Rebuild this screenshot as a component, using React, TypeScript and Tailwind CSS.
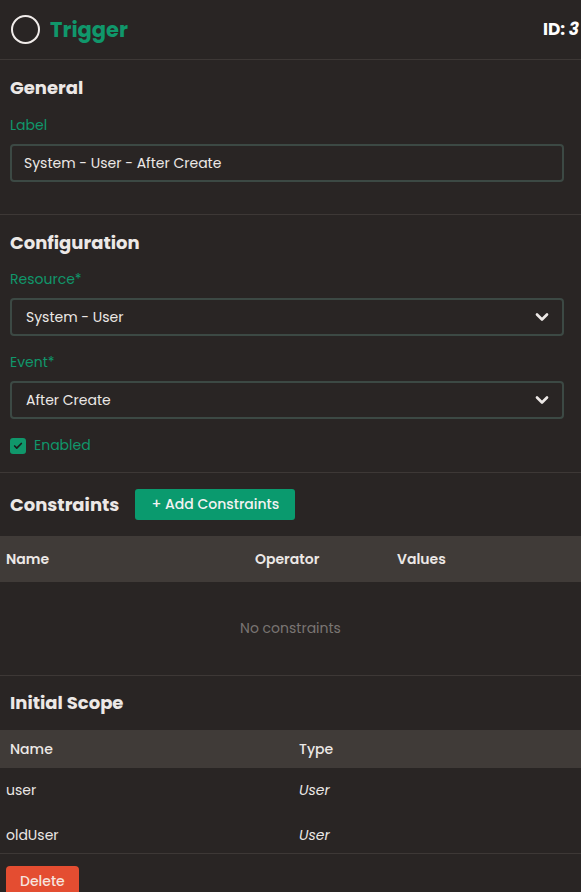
import React from "react";
import { ChevronDown, Check } from "lucide-react";

const font = { fontFamily: "Poppins, Inter, 'Open Sans', sans-serif" };

function Field({ label, children }: { label: string; children: React.ReactNode }) {
  return (
    <div className="flex flex-col">
      <label className="text-[14px] text-[#10976b] leading-5 mb-[9px]">{label}</label>
      {children}
    </div>
  );
}

function Select({ value }: { value: string }) {
  return (
    <div className="flex items-center justify-between h-[38px] rounded-[4px] border-2 border-[#3c4944] pl-[14px] pr-[10px] text-[14px] text-[#ece8e6]">
      <span>{value}</span>
      <ChevronDown className="h-5 w-5 text-[#ece8e6]" strokeWidth={3.2} />
    </div>
  );
}

export default function App() {
  return (
    <div className="w-[581px] min-h-[892px] bg-[#292524] text-[#ece8e6] overflow-hidden" style={font}>
      {/* Header */}
      <div className="flex items-center justify-between h-[60px] pl-[11px] pr-[2px] border-b border-[#3d3836]">
        <div className="flex items-center gap-[10px]">
          <div className="h-[29px] w-[29px] rounded-full border-2 border-[#f0ecea]" />
          <h1 className="text-[21px] font-bold text-[#10976b]">Trigger</h1>
        </div>
        <span className="text-[17px] font-bold text-white">
          ID: <i>3</i>
        </span>
      </div>

      {/* General */}
      <section className="pl-[10px] pr-[17px] pt-[16px] pb-[32px] border-b border-[#3d3836]">
        <h2 className="text-[18px] font-bold leading-6 mb-[15px]">General</h2>
        <Field label="Label">
          <div className="flex items-center h-[38px] rounded-[4px] border-2 border-[#3c4944] px-[12px] text-[14px]">
            System - User - After Create
          </div>
        </Field>
      </section>

      {/* Configuration */}
      <section className="pl-[10px] pr-[17px] pt-[16px] pb-[16px] border-b border-[#3d3836]">
        <h2 className="text-[18px] font-bold leading-6 mb-[14px]">Configuration</h2>
        <div className="flex flex-col gap-[16px]">
          <Field label="Resource*">
            <Select value="System - User" />
          </Field>
          <Field label="Event*">
            <Select value="After Create" />
          </Field>
          <div className="flex items-center gap-[8px]">
            <span className="flex items-center justify-center h-[16px] w-[16px] rounded-[3px] bg-[#10976b]">
              <Check className="h-[10px] w-[10px] text-[#1b1b1b]" strokeWidth={4} />
            </span>
            <span className="text-[14px] text-[#10976b]">Enabled</span>
          </div>
        </div>
      </section>

      {/* Constraints */}
      <section className="border-b border-[#3d3836]">
        <div className="flex items-center gap-[16px] px-[10px] pt-[16px] pb-[16px]">
          <h2 className="text-[18px] font-bold leading-6">Constraints</h2>
          <button className="h-[31px] px-[16px] rounded-[3px] bg-[#0a9a6e] text-[14px] font-medium text-[#f2f2f2]">
            + Add Constraints
          </button>
        </div>
        <div className="grid grid-cols-[249px_142px_1fr] h-[46px] items-center bg-[#403b38] px-[6px] text-[14px] font-semibold">
          <span>Name</span>
          <span>Operator</span>
          <span>Values</span>
        </div>
        <div className="h-[93px] flex items-center justify-center text-[14px] text-[#7a7573]">
          No constraints
        </div>
      </section>

      {/* Initial Scope */}
      <section className="border-b border-[#3d3836]">
        <h2 className="text-[18px] font-bold leading-6 px-[10px] pt-[15px] pb-[15px]">Initial Scope</h2>
        <div className="grid grid-cols-[289px_1fr] h-[38px] items-center bg-[#403b38] px-[10px] text-[14px] font-medium">
          <span>Name</span>
          <span>Type</span>
        </div>
        <div className="grid grid-cols-[293px_1fr] h-[45px] items-center px-[6px] text-[14px]">
          <span>user</span>
          <span className="italic">User</span>
        </div>
        <div className="grid grid-cols-[293px_1fr] h-[40px] items-center px-[6px] pt-[4px] text-[14px]">
          <span>oldUser</span>
          <span className="italic">User</span>
        </div>
      </section>

      <div className="px-[6px] pt-[12px]">
        <button className="h-[30px] px-[14px] rounded-[4px] bg-[#e44d31] text-[14px] font-medium text-[#f6e3de]">
          Delete
        </button>
      </div>
    </div>
  );
}
